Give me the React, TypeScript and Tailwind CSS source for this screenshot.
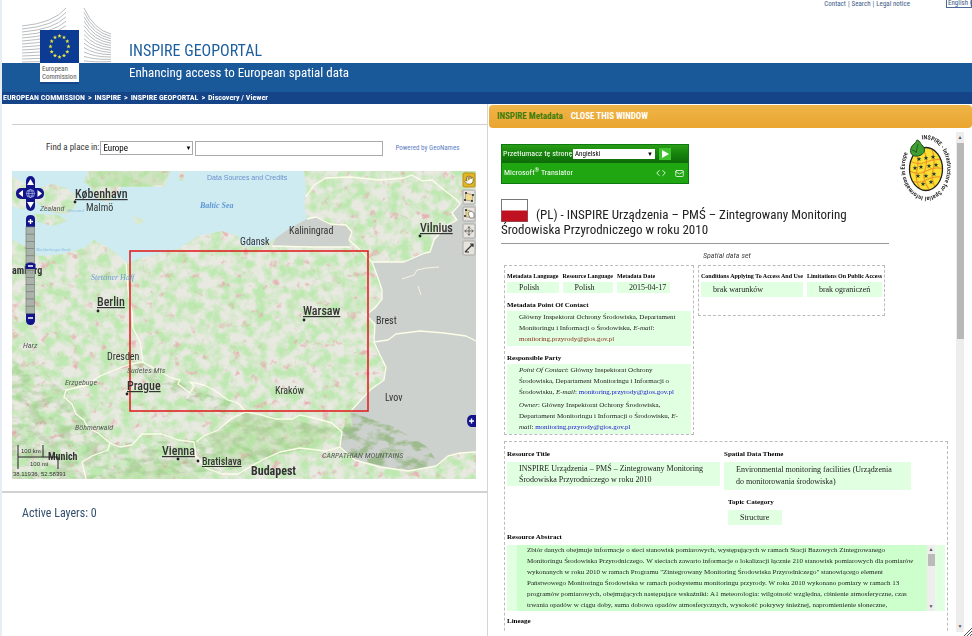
import type { ReactNode } from "react";
import { ChevronLeft, ChevronRight, Hand, Mail, Move } from "lucide-react";

const sans = "font-['Roboto_Condensed','Open_Sans',sans-serif]";

const stars = Array.from({ length: 12 }, (_, i) => {
  const a = (i * Math.PI) / 6;
  return [Math.sin(a), -Math.cos(a)];
});

function starPoints(cx: number, cy: number, r: number) {
  return Array.from({ length: 10 }, (_, i) => {
    const a = (i * Math.PI) / 5;
    const d = i % 2 ? r * 0.42 : r;
    return `${(cx + d * Math.sin(a)).toFixed(2)},${(cy - d * Math.cos(a)).toFixed(2)}`;
  }).join(" ");
}

function CommissionLogo() {
  return (
    <svg aria-label="European Commission" className="absolute left-[18px] top-1 h-20 w-24" role="img" viewBox="20 4 96 80">
      <g fill="none" stroke="#b9bcbf" strokeWidth="1">
        {Array.from({ length: 13 }, (_, i) => (
          <path d={`M22 ${26 + i * 3} Q54 ${23 + i * 3.2} 66 ${8 + i * 4.4}`} key={`l${i}`} />
        ))}
        {Array.from({ length: 13 }, (_, i) => (
          <path d={`M84 ${8 + i * 4.4} Q94 ${30 + i * 2.7} 111 ${34 + i * 2.3}`} key={`r${i}`} />
        ))}
      </g>
      <rect fill="#16478c" height="21" width="39" x="40" y="64" />
      <rect fill="#0b3b93" height="33" width="39" x="40" y="30" />
      {stars.map(([x, y], i) => (
        <polygon fill="#e9e54a" key={i} points={starPoints(59.5 + x * 9, 46.5 + y * 10.5, 2.2)} />
      ))}
      <rect fill="#fff" height="19" width="39" x="40" y="63" />
      <g fill="#555" fontFamily="'Roboto Condensed','Open Sans',sans-serif" fontSize="7">
        <text x="42" y="71">European</text>
        <text x="42" y="79">Commission</text>
      </g>
    </svg>
  );
}

function Header() {
  return (
    <header className={`relative shrink-0 ${sans}`}>
      <div className="flex h-[63px] flex-col justify-between bg-white pl-[127px]">
        <div className="flex h-3 justify-end text-[7px] leading-[8px] text-[#3c5a86]">
          <nav className="flex gap-0.5">
            <a href="#contact">Contact</a>|<a href="#search">Search</a>|<a href="#legal">Legal notice</a>
          </nav>
          <select
            aria-label="Language"
            className="ml-9 h-2 w-[26px] appearance-none overflow-hidden border border-t-0 border-[#4a6b98] bg-white pl-px text-[7px] leading-[7px]"
          >
            <option>English (en)</option>
          </select>
        </div>
        <h1 className="text-[16px] leading-6 text-[#1c5f9e]">INSPIRE GEOPORTAL</h1>
      </div>
      <p className="h-[29px] bg-[#19599a] pl-[127px] text-[13px] leading-5 text-white">
        Enhancing access to European spatial data
      </p>
      <nav className="flex h-3 items-center gap-[3px] bg-[#164488] pl-px text-[8px] font-bold text-white">
        <a href="#ec">EUROPEAN COMMISSION</a>&gt;<a href="#inspire">INSPIRE</a>&gt;
        <a href="#geoportal">INSPIRE GEOPORTAL</a>&gt;<span>Discovery / Viewer</span>
      </nav>
      <CommissionLogo />
    </header>
  );
}

const land =
  "M12 240 L30 248 L38 256 L62 254 L84 248 L94 240 L106 246 L120 256 L128 264 L140 258 L178 249 L198 236 L222 231 L238 236 L243 246 L262 247 L276 238 L290 228 L307 219 L304 205 L306 190 L304 171 L476 171 L476 479 L12 479 Z";
const sweden = "M88 171 L84 182 L92 188 L94 197 L108 203 L122 187 L164 187 L171 171 Z";
const zealand = "M40 188 L52 184 L66 188 L75 194 L76 206 L68 214 L54 213 L44 207 L32 200 Z";
const islands =
  "M12 176 L26 184 L30 200 L24 210 L12 206 Z M34 214 L58 215 L68 221 L52 226 L36 221 Z M180 171 L184 171 L183 181 L179 180 Z M133 216 L144 220 L139 225 L134 222 Z";
const east =
  "M476 205 L458 203 L452 213 L457 220 L446 226 L434 240 L430 252 L425 253 L404 262 L372 262 L378 278 L382 290 L382 299 L375 308 L366 315 L375 324 L374 342 L380 355 L386 367 L384 380 L370 390 L350 412 L353 428 L342 432 L340 447 L355 460 L380 467 L408 471 L436 466 L448 456 L460 453 L476 452 Z";
const kaliningrad = "M272 246 L276 238 L290 228 L307 219 L316 217 L330 224 L346 225 L352 232 L349 240 L350 247 Z";

const borders = [
  "M306 197 L314 185 L326 178 L350 177 L380 180 L404 178 L412 175 L422 181 L432 180 L444 190 L456 199 L460 204 L452 213 L457 220 L446 226 L434 240 L430 252 L425 253 L404 262 L372 262",
  "M307 219 L316 217 L330 224 L346 225 L352 232 L349 240 L360 250 L372 262 L378 278 L382 290 L382 299 L375 308 L366 315 L375 324 L374 342 L380 355 L386 367 L384 380 L370 390 L350 412",
  "M272 246 L310 247 L350 247",
  "M374 342 L388 340 L396 334 L420 331 L444 333 L466 336 L476 341",
  "M126 263 L128 290 L132 312 L133 328 L140 342 L143 362 L130 364 L112 371 L98 377 L88 385 L66 390 L64 397 L72 404 L76 414 L84 420 L88 428 L98 433 L110 443 L120 447 L132 445 L142 434 L162 434 L178 440 L194 442 L196 456 L206 468 L222 474 L238 474",
  "M143 362 L160 372 L172 378 L180 380 L178 384 L190 393 L194 386 L190 382 L204 385 L214 390 L228 400 L238 403 L246 412 L262 415 L276 419 L292 419 L300 415 L314 418 L332 423 L342 432",
  "M246 412 L232 418 L218 430 L204 436 L196 442",
  "M110 443 L108 450 L92 456 L82 462 L86 479",
  "M342 432 L340 447 L326 451 L300 448 L280 452 L262 460 L238 474",
  "M340 447 L355 460 L380 467 L408 471 L436 466 L448 456 L460 453 L476 452",
];

type Place = { name: string; x: number; y: number; size?: number; style?: "city" | "capital" | "bold" | "region"; dot?: [number, number] };

const places: Place[] = [
  { name: "København", x: 75, y: 198, style: "capital", dot: [75, 202] },
  { name: "Vilnius", x: 420, y: 232, style: "capital", dot: [420, 236] },
  { name: "Berlin", x: 97, y: 306, style: "capital", dot: [98, 311] },
  { name: "Warsaw", x: 303, y: 315, style: "capital", dot: [304, 320] },
  { name: "Prague", x: 127, y: 390, style: "capital", dot: [127, 394] },
  { name: "Vienna", x: 162, y: 455, style: "capital", dot: [178, 459] },
  { name: "Bratislava", x: 202, y: 465, size: 10, style: "capital", dot: [198, 461] },
  { name: "Budapest", x: 251, y: 475, style: "bold" },
  { name: "Munich", x: 48, y: 460, size: 10, style: "bold" },
  { name: "amburg", x: 12, y: 274, size: 10, style: "bold" },
  { name: "Malmö", x: 86, y: 211 },
  { name: "Kaliningrad", x: 289, y: 234 },
  { name: "Gdansk", x: 240, y: 245 },
  { name: "Brest", x: 376, y: 324 },
  { name: "Kraków", x: 275, y: 394 },
  { name: "Lvov", x: 385, y: 401 },
  { name: "Dresden", x: 107, y: 360 },
  { name: "Zealand", x: 40, y: 211, size: 8, style: "region" },
  { name: "Harz", x: 23, y: 348, size: 8, style: "region" },
  { name: "Erzgebuge", x: 65, y: 385, size: 8, style: "region" },
  { name: "Sudetes Mts", x: 127, y: 373, size: 8, style: "region" },
  { name: "Böhmerwald", x: 75, y: 430, size: 8, style: "region" },
  { name: "CARPATHIAN MOUNTAINS", x: 322, y: 458, size: 8, style: "region" },
];

const weights = { city: 400, capital: 500, bold: 700, region: 400 };

function MapLabel({ name, x, y, size, style = "city", dot }: Place) {
  const fontSize = size ?? (style === "capital" || style === "bold" ? 12 : 10);
  return (
    <>
      <text
        fill={style === "region" ? "#555c55" : "#333"}
        fontSize={fontSize}
        fontStyle={style === "region" ? "italic" : "normal"}
        fontWeight={weights[style]}
        textDecoration={style === "capital" ? "underline" : undefined}
        x={x}
        y={y}
      >
        {name}
      </text>
      {dot && <circle cx={dot[0]} cy={dot[1]} fill="#222" r="1.4" />}
    </>
  );
}

function MapTool({ y, active, children }: { y: number; active?: boolean; children: ReactNode }) {
  return (
    <g transform={`translate(463 ${y})`}>
      <rect fill={active ? "#e2b622" : "#e6e4dc"} height="14" rx="1" stroke={active ? "#b88f12" : "#aaa"} width="12" />
      {children}
    </g>
  );
}

function MapView() {
  return (
    <svg aria-label="Map of Central Europe" className="block h-[308px] w-full" preserveAspectRatio="xMidYMid slice" role="img" viewBox="12 171 464 308">
      <defs>
        <filter colorInterpolationFilters="sRGB" height="100%" id="green" width="100%" x="0" y="0">
          <feTurbulence baseFrequency="0.09" numOctaves="6" seed="4" type="fractalNoise" />
          <feColorMatrix values="0 0 0 0 0.74  0 0 0 0 0.91  0 0 0 0 0.69  0 3 0 0 -1.1" />
          <feComposite in2="SourceGraphic" operator="in" />
        </filter>
        <filter colorInterpolationFilters="sRGB" height="100%" id="pink" width="100%" x="0" y="0">
          <feTurbulence baseFrequency="0.1" numOctaves="5" seed="11" type="fractalNoise" />
          <feColorMatrix values="0 0 0 0 0.90  0 0 0 0 0.70  0 0 0 0 0.70  5 0 0 0 -3.3" />
          <feComposite in2="SourceGraphic" operator="in" />
        </filter>
        <filter colorInterpolationFilters="sRGB" height="100%" id="relief" width="100%" x="0" y="0">
          <feTurbulence baseFrequency="0.07 0.12" numOctaves="4" seed="7" type="fractalNoise" />
          <feColorMatrix values="0 0 0 0 0.50  0 0 0 0 0.68  0 0 0 0 0.40  4 0 0 0 -1.7" />
          <feComposite in2="SourceGraphic" operator="in" />
        </filter>
      </defs>
      <rect fill="#cdebf1" height="308" width="464" x="12" y="171" />
      {["", "green", "pink"].map((id) => (
        <g fill="#e8e9e0" filter={id ? `url(#${id})` : undefined} key={id}>
          <path d={land} />
          <path d={sweden} />
          <path d={zealand} />
          <path d={islands} />
        </g>
      ))}
      <g fill="#a9db90" opacity=".35">
        <path d="M88 171 L92 186 L120 187 L162 185 L171 171 Z" />
        <path d="M60 379 L88 382 L66 393 L78 410 L104 433 L94 440 L60 405 L12 350 L12 330 L40 345 Z" filter="url(#green)" />
        <path d="M128 358 L170 376 L200 392 L232 402 L225 414 L190 402 L150 382 Z" filter="url(#relief)" />
        <path d="M100 479 L130 466 L172 460 L196 476 L200 479 Z" />
        <path d="M204 436 L246 412 L342 428 L320 446 L262 458 L225 462 Z" />
      </g>
      <path d="M12 360 L66 390 L110 443 L200 440 L246 412 L342 430 L300 450 L230 470 L100 479 L12 479 Z" filter="url(#relief)" opacity=".3" />
      <g fill="#cdd1cd">
        <path d={east} />
        <path d={kaliningrad} />
      </g>
      <path d="M350 412 L392 426 L426 446 L440 465 L408 471 L355 460 L340 447 L342 432 Z" filter="url(#relief)" opacity=".6" />
      <g fill="none" stroke="#fbfde9" strokeLinejoin="round" strokeWidth="1.3">
        {borders.map((d) => (
          <path d={d} key={d} />
        ))}
        <path d="M402 279 L414 275 L417 270 L426 268 L439 267 M418 286 L421 295" strokeWidth=".8" />
      </g>
      <rect fill="none" height="160" stroke="#e02424" strokeWidth="1.6" width="238" x="130" y="251" />

      <g fontFamily="'Liberation Sans Narrow','Roboto Condensed','Liberation Sans',sans-serif">
        {places.map((place) => (
          <MapLabel key={place.name} {...place} />
        ))}
      </g>
      <g fill="#5f97d4" fontFamily="'Liberation Serif',serif" fontStyle="italic">
        <text fontSize="8" fontWeight="700" x="200" y="208">Baltic Sea</text>
        <text fillOpacity=".9" fontSize="8" x="91" y="280">Stettiner Haff</text>
        <text fillOpacity=".6" fontSize="5" x="67" y="212">Øresund</text>
        <text fillOpacity=".6" fontSize="4" x="36" y="251">Mecklenburger Bucht</text>
      </g>
      <text fill="#6f8fd0" fontFamily="'Liberation Sans',sans-serif" fontSize="7" x="207" y="180">Data Sources and Credits</text>

      {/* pan and zoom controls */}
      <g fill="#14148a">
        <rect height="35" rx="5" width="9" x="26" y="176" />
        <rect height="11" rx="5" width="28" x="16" y="188" />
        <path d="M26 227 V219 Q26 215 30.500 215 T35 219 V227 Z" />
        <path d="M26 313 V320 Q26 325 30.500 325 T35 320 V313 Z" />
        <path d="M476 415 H471 Q467 416 467 421 T471 427 H476 Z" />
      </g>
      <g fill="#fff">
        <path d="M30.500 179 L34 185 H27 Z M30.500 208 L34 202 H27 Z M18.500 193.500 L23 190 V197 Z M42 193.500 L37.500 190 V197 Z" />
      </g>
      <g fill="none" stroke="#aebbf0" strokeWidth=".7">
        <circle cx="30.500" cy="193.500" r="4" />
        <ellipse cx="30.500" cy="193.500" rx="1.800" ry="4" />
        <path d="M26.500 193.500 H34.500 M27.500 191 H33.500 M27.500 196 H33.500" />
      </g>
      <g fill="#a5ada5" fillOpacity=".9" stroke="#7d857d" strokeWidth=".7">
        {Array.from({ length: 12 }, (_, i) => (
          <rect height="7.200" key={i} width="8.500" x="26" y={227 + i * 7.200} />
        ))}
      </g>
      <path d="M25.500 264 Q30.500 261 35.500 264 V269 H25.500 Z" fill="#14148a" />
      <path d="M28 221.500 H33 M30.500 219 V224 M28 266 H33 M28 318 H33 M469 421 H474 M471.500 418.500 V423.500" stroke="#fff" strokeWidth="1.400" />

      {/* scale */}
      <path d="M18 445 V469 M18 457 H58 V469 M43 445 V457" fill="none" stroke="#222" />
      <g fill="#333" fontFamily="'Liberation Sans',sans-serif" fontSize="6">
        <text x="21" y="453">100 km</text>
        <text x="30" y="466">100 mi</text>
        <text x="13" y="476">38.11936, 52.58391</text>
      </g>

      <MapTool active y={173}>
        <Hand color="#7a6420" fill="#fff" height={10} width={10} x={1} y={2} />
      </MapTool>
      <MapTool y={190}>
        <path d="M3 3 L10 5 L9 11 L2 10 Z" fill="#f1dd92" stroke="#8a8160" strokeWidth=".6" />
        <path d="M2 3 h2 M9 5 h2 M8 11 h2 M1 10 h2" stroke="#222" strokeWidth="1.500" />
      </MapTool>
      <MapTool y={207}>
        <path d="M3 3 L8 4 L10 10 L3 10 Z" fill="#f1dd92" stroke="#8a8160" strokeWidth=".6" />
        <path d="M5 6 L7 11 H11 V6 L8 4 Z" fill="#fff" stroke="#444" strokeWidth=".6" />
        <path d="M2 3 h2 M1 9 h2" stroke="#222" strokeWidth="1.500" />
      </MapTool>
      <MapTool y={224}>
        <Move color="#555" height={10} width={10} x={1} y={2} />
      </MapTool>
      <MapTool y={241}>
        <path d="M2 11 L5 8 L9 4 L10 3 M7 3 H10 V6 M2 11 H6" fill="none" stroke="#333" strokeWidth="1.200" />
      </MapTool>
    </svg>
  );
}

function Viewer() {
  return (
    <main className={`flex min-w-0 flex-col pt-5 ${sans}`}>
      <div className="ml-2.5 border-t border-[#cfcfcf]" />
      <form className="ml-2.5 flex h-[46px] items-center pl-[34px]">
        <label className="mr-px text-[9px] text-[#333]" htmlFor="region">
          Find a place in:
        </label>
        <div className="relative">
          <select
            className="block h-[14px] w-[93px] appearance-none border border-[#aaa] bg-white pl-0.5 text-[9px] leading-3 text-black"
            id="region"
          >
            <option>Europe</option>
          </select>
          <span className="pointer-events-none absolute right-0.5 top-1 text-[6px] leading-[6px]">▼</span>
        </div>
        <input aria-label="Place name" className="ml-0.5 h-[15px] w-[188px] border border-[#aaa] bg-white px-1 text-[9px]" type="text" />
        <a className="ml-3 text-[7px] text-[#5f7fc4]" href="#geonames">
          Powered by GeoNames
        </a>
      </form>
      <div className="ml-2.5 mr-[11px]">
        <MapView />
      </div>
      <div className="mt-3 border-t-2 border-[#d2d2d2]" />
      <p className="ml-5 mt-3 text-[12px] leading-4 text-[#33506f]">Active Layers: 0</p>
    </main>
  );
}

function Label({ children }: { children: ReactNode }) {
  return <h3 className="whitespace-nowrap text-[7px] font-bold leading-[12px] text-black">{children}</h3>;
}

/* column headings of the narrow boxes */
function SmallLabel({ children }: { children: ReactNode }) {
  return <h3 className="whitespace-nowrap text-[6px] font-bold leading-[12px] text-black">{children}</h3>;
}

function Value({ className = "text-[7px] leading-[11px]", children }: { className?: string; children: ReactNode }) {
  return <div className={`whitespace-nowrap bg-[#e1ffe1] pl-3 text-[#222] ${className}`}>{children}</div>;
}

function Mailto({ visited }: { visited?: boolean }) {
  return (
    <a className={visited ? "text-[#8b2a1c]" : "text-[#1414d2]"} href="mailto:monitoring.przyrody@gios.gov.pl">
      monitoring.przyrody@gios.gov.pl
    </a>
  );
}

function Translator() {
  return (
    <form className="flex h-10 w-[188px] flex-col border border-[#0c7a10] bg-[#1fa611] text-[8px] text-white">
      <div className="flex h-[18px] items-center bg-linear-to-b from-[#2a9d18] via-[#15830c] to-[#0d6a08] pl-px">
        <label className="w-[70px] whitespace-nowrap" htmlFor="target">
          Przetłumacz tę stronę
        </label>
        <div className="relative">
          <select className="block h-[10px] w-[82px] appearance-none bg-white pl-0.5 text-[7px] leading-[10px] text-black" id="target">
            <option>Angielski</option>
          </select>
          <span className="pointer-events-none absolute right-0.5 top-0.5 text-[6px] leading-[6px] text-black">▼</span>
        </div>
        <button aria-label="Translate" className="ml-1 flex h-3 w-3 items-center justify-center bg-[#3fc22d]" type="button">
          <svg className="h-2 w-2" viewBox="0 0 8 8">
            <path d="M1 0 L8 4 L1 8 Z" fill="#fff" />
          </svg>
        </button>
      </div>
      <div className="flex flex-1 items-center pl-0.5 pr-1">
        <span>
          Microsoft<sup className="text-[6px]">®</sup> Translator
        </span>
        <button aria-label="Embed" className="ml-auto mr-1.5 flex" type="button">
          <ChevronLeft className="-mr-1" size={10} />
          <ChevronRight size={10} />
        </button>
        <button aria-label="Send by e-mail" type="button">
          <Mail size={9} />
        </button>
      </div>
    </form>
  );
}

const pineappleStars = [
  [-7, -9], [0, -10], [7, -11],
  [-11, 0], [-5, -1], [3, -2], [10, -3],
  [-8, 8], [0, 8], [8, 6],
  [-3, 16], [5, 14],
];

function InspireLogo() {
  return (
    <svg aria-label="INSPIRE" className="h-[72px] w-14 overflow-visible" role="img" viewBox="-28 -36 56 72">
      <defs>
        <path d="M-4 -28.500 A22 29 0 0 1 4 28.500 A22 29 0 0 1 -4 -28.500" id="ring" />
        <clipPath id="fruit">
          <ellipse cx="0" cy="1" rx="16.500" ry="21.500" />
        </clipPath>
      </defs>
      <text fill="#222" fontFamily="'Roboto Condensed','Open Sans',sans-serif" fontSize="6" fontWeight="600">
        <textPath href="#ring">INSPIRE - Infrastructure for Spatial Information in Europe</textPath>
      </text>
      <ellipse cx="0" cy="1" fill="#fbdf35" rx="16.500" ry="21.500" />
      <g clipPath="url(#fruit)" fill="none" stroke="#f09a25" strokeWidth="1.200">
        <path d="M-18 -8 Q-9 -2 0 -6 T18 -8 M-18 2 Q-9 8 0 3 T18 1 M-18 11 Q-9 17 0 12 T18 10" />
        <path d="M-12 -20 Q-6 -8 -9 2 T-4 24 M-4 -22 Q3 -8 -1 2 T5 24 M5 -22 Q10 -8 7 2 T11 22" />
      </g>
      <g fill="#1d3c34">
        {pineappleStars.map(([x, y]) => (
          <polygon key={`${x}${y}`} points={starPoints(x, y, 2.500)} />
        ))}
      </g>
      <ellipse cx="0" cy="1" fill="none" rx="16.500" ry="21.500" stroke="#222" strokeWidth="1.300" />
      <path d="M-5 -13 C-12 -10 -17 -13 -15 -20 C-14 -24 -10 -24 -9 -28 C-5 -27 -6 -24 -4 -23 C-1 -20 0 -16 -5 -13 Z" fill="#3f9f32" stroke="#1c4d18" />
      <path d="M-8 -24 L-10 -15 M-14 -18 L-9 -16" fill="none" stroke="#1c4d18" strokeWidth=".7" />
    </svg>
  );
}

const abstract = [
  "Zbiór danych obejmuje informacje o sieci stanowisk pomiarowych, występujących w ramach Stacji Bazowych Zintegrowanego",
  "Monitoringu Środowiska Przyrodniczego. W sieciach zawarto informacje o lokalizacji łącznie 210 stanowisk pomiarowych dla pomiarów",
  'wykonanych w roku 2010 w ramach Programu "Zintegrowany Monitoring Środowiska Przyrodniczego" stanowiącego element',
  "Państwowego Monitoringu Środowiska w ramach podsystemu monitoringu przyrody. W roku 2010 wykonano pomiary w ramach 13",
  "programów pomiarowych, obejmujących następujące wskaźniki: A1 meteorologia: wilgotność względna, ciśnienie atmosferyczne, czas",
  "trwania opadów w ciągu doby, suma dobowa opadów atmosferycznych, wysokość pokrywy śnieżnej, napromienienie słoneczne,",
];

function MetadataPanel() {
  return (
    <aside className={`flex min-w-0 flex-col overflow-hidden border-l border-[#d5d5d5] bg-white pl-px ${sans}`}>
      <div className="mt-px flex h-[23px] shrink-0 items-center gap-2 rounded bg-linear-to-b from-[#efb548] to-[#e9a52f] pl-2 text-[9px] font-bold">
        <h2 className="text-[#3f7d0c]">INSPIRE Metadata</h2>
        <button className="text-white" type="button">
          CLOSE THIS WINDOW
        </button>
      </div>
      <div className="mb-1 mt-1 flex min-h-0 flex-1 pr-2">
        <div className="min-w-0 flex-1 overflow-hidden pl-3 pr-0.5">
          <div className="flex items-start justify-between">
            <div className="w-[388px] pt-3">
              <Translator />
              <h2 className="mt-[15px] border-b border-[#999] pb-1.5 text-[13px] leading-[15px] text-[#222]">
                <svg aria-label="Poland" className="mr-2 inline-block h-[23px] w-[27px] align-bottom" role="img" viewBox="0 0 27 23">
                  <rect fill="#fff" height="22" stroke="#777" width="26" x=".5" y=".5" />
                  <rect fill="#c01120" height="11" width="26" x=".5" y="11.500" />
                </svg>
                (PL) - INSPIRE Urządzenia – PMŚ – Zintegrowany Monitoring
                <br />
                Środowiska Przyrodniczego w roku 2010
              </h2>
            </div>
            <InspireLogo />
          </div>
          <p className="ml-[202px] mt-1.5 text-[8px] italic leading-[12px] text-[#444]">Spatial data set</p>

          <div className="mr-1.5 font-['Liberation_Serif',serif]">
            <div className="ml-[3px] mt-[3px] flex items-start gap-1">
              <section className="w-[190px] border border-dashed border-[#bbb] px-0.5 pt-1">
                <div className="flex gap-1">
                  <div>
                    <SmallLabel>Metadata Language</SmallLabel>
                    <Value className="text-[8px] leading-[11px]">Polish</Value>
                  </div>
                  <div>
                    <SmallLabel>Resource Language</SmallLabel>
                    <Value className="text-[8px] leading-[11px]">Polish</Value>
                  </div>
                  <div className="w-[53px]">
                    <SmallLabel>Metadata Date</SmallLabel>
                    <Value className="text-[8px] leading-[11px]">2015-04-17</Value>
                  </div>
                </div>
                <div className="mt-1.5">
                  <Label>Metadata Point Of Contact</Label>
                  <Value className="py-px text-[7px] leading-[11px]">
                    Główny Inspektorat Ochrony Środowiska, Departament
                    <br />
                    Monitoringu i Informacji o Środowisku, <i>E-mail</i>:
                    <br />
                    <Mailto visited />
                  </Value>
                </div>
                <div className="mt-1.5">
                  <Label>Responsible Party</Label>
                  <Value className="py-px text-[7px] leading-[11px]">
                    <p>
                      <i>Point Of Contact</i>: Główny Inspektorat Ochrony
                      <br />
                      Środowiska, Departament Monitoringu i Informacji o
                      <br />
                      Środowisku, <i>E-mail</i>: <Mailto />
                    </p>
                    <p className="mt-0.5">
                      <i>Owner</i>: Główny Inspektorat Ochrony Środowiska,
                      <br />
                      Departament Monitoringu i Informacji o Środowisku, <i>E-</i>
                      <br />
                      <i>mail</i>: <Mailto />
                    </p>
                  </Value>
                </div>
              </section>
              <section className="flex h-[51px] gap-1 border border-dashed border-[#bbb] px-0.5 pt-1">
                <div>
                  <SmallLabel>Conditions Applying To Access And Use</SmallLabel>
                  <Value className="py-0.5 text-[8px] leading-[11px]">brak warunków</Value>
                </div>
                <div>
                  <SmallLabel>Limitations On Public Access</SmallLabel>
                  <Value className="py-0.5 text-[8px] leading-[11px]">brak ograniczeń</Value>
                </div>
              </section>
            </div>

            <section className="ml-[3px] mt-1.5 h-[220px] border border-dashed border-[#bbb] px-0.5 pt-1.5">
              <div className="flex gap-1">
                <div className="w-[213px]">
                  <Label>Resource Title</Label>
                  <Value className="mt-0.5 py-px text-[8px] leading-[11px]">
                    INSPIRE Urządzenia – PMŚ – Zintegrowany Monitoring
                    <br />
                    Środowiska Przyrodniczego w roku 2010
                  </Value>
                </div>
                <div className="w-[187px]">
                  <Label>Spatial Data Theme</Label>
                  <Value className="mt-0.5 py-0.5 text-[8px] leading-[12px]">
                    Environmental monitoring facilities (Urządzenia
                    <br />
                    do monitorowania środowiska)
                  </Value>
                  <div className="ml-1 mt-1.5">
                    <Label>Topic Category</Label>
                    <Value className="mt-0.5 w-[54px] py-0.5 text-[8px] leading-[11px]">Structure</Value>
                  </div>
                </div>
              </div>
              <div className="mt-1.5">
                <Label>Resource Abstract</Label>
                <div className="mt-0.5 flex h-[66px] overflow-hidden bg-[#e1ffe1] px-2.5">
                  <div className="min-w-0 flex-1 overflow-hidden whitespace-nowrap bg-[#ccffcc] pl-2.5 text-[7px] leading-[11px] text-[#222]">
                    {abstract.map((line) => (
                      <p key={line}>{line}</p>
                    ))}
                  </div>
                  <div className="flex w-2 flex-col items-center justify-between bg-[#eee] text-[5px] leading-[9px] text-[#555]">
                    <span>▲</span>
                    <span className="mb-auto h-3 w-[7px] bg-[#bbb]" />
                    <span>▼</span>
                  </div>
                </div>
              </div>
              <div className="mt-1">
                <Label>Lineage</Label>
              </div>
            </section>
          </div>
        </div>
        <div className="flex w-2 flex-col items-center justify-between bg-[#ededed] text-[5px] leading-[11px] text-[#555]">
          <span>▲</span>
          <span className="mb-auto h-[196px] w-[7px] bg-[#b8b8b8]" />
          <span>▼</span>
        </div>
      </div>
      <svg className="-mt-2 h-2 w-2 shrink-0 self-end" viewBox="0 0 8 8">
        <path d="M0 8 L8 0 M3 8 L8 3 M6 8 L8 6" stroke="#555" />
      </svg>
    </aside>
  );
}

export default function App() {
  return (
    <div className="flex h-screen flex-col overflow-hidden border-l-2 border-[#e6edf5] bg-white">
      <Header />
      <div className="grid min-h-0 flex-1 grid-cols-[485fr_485fr]">
        <Viewer />
        <MetadataPanel />
      </div>
    </div>
  );
}
